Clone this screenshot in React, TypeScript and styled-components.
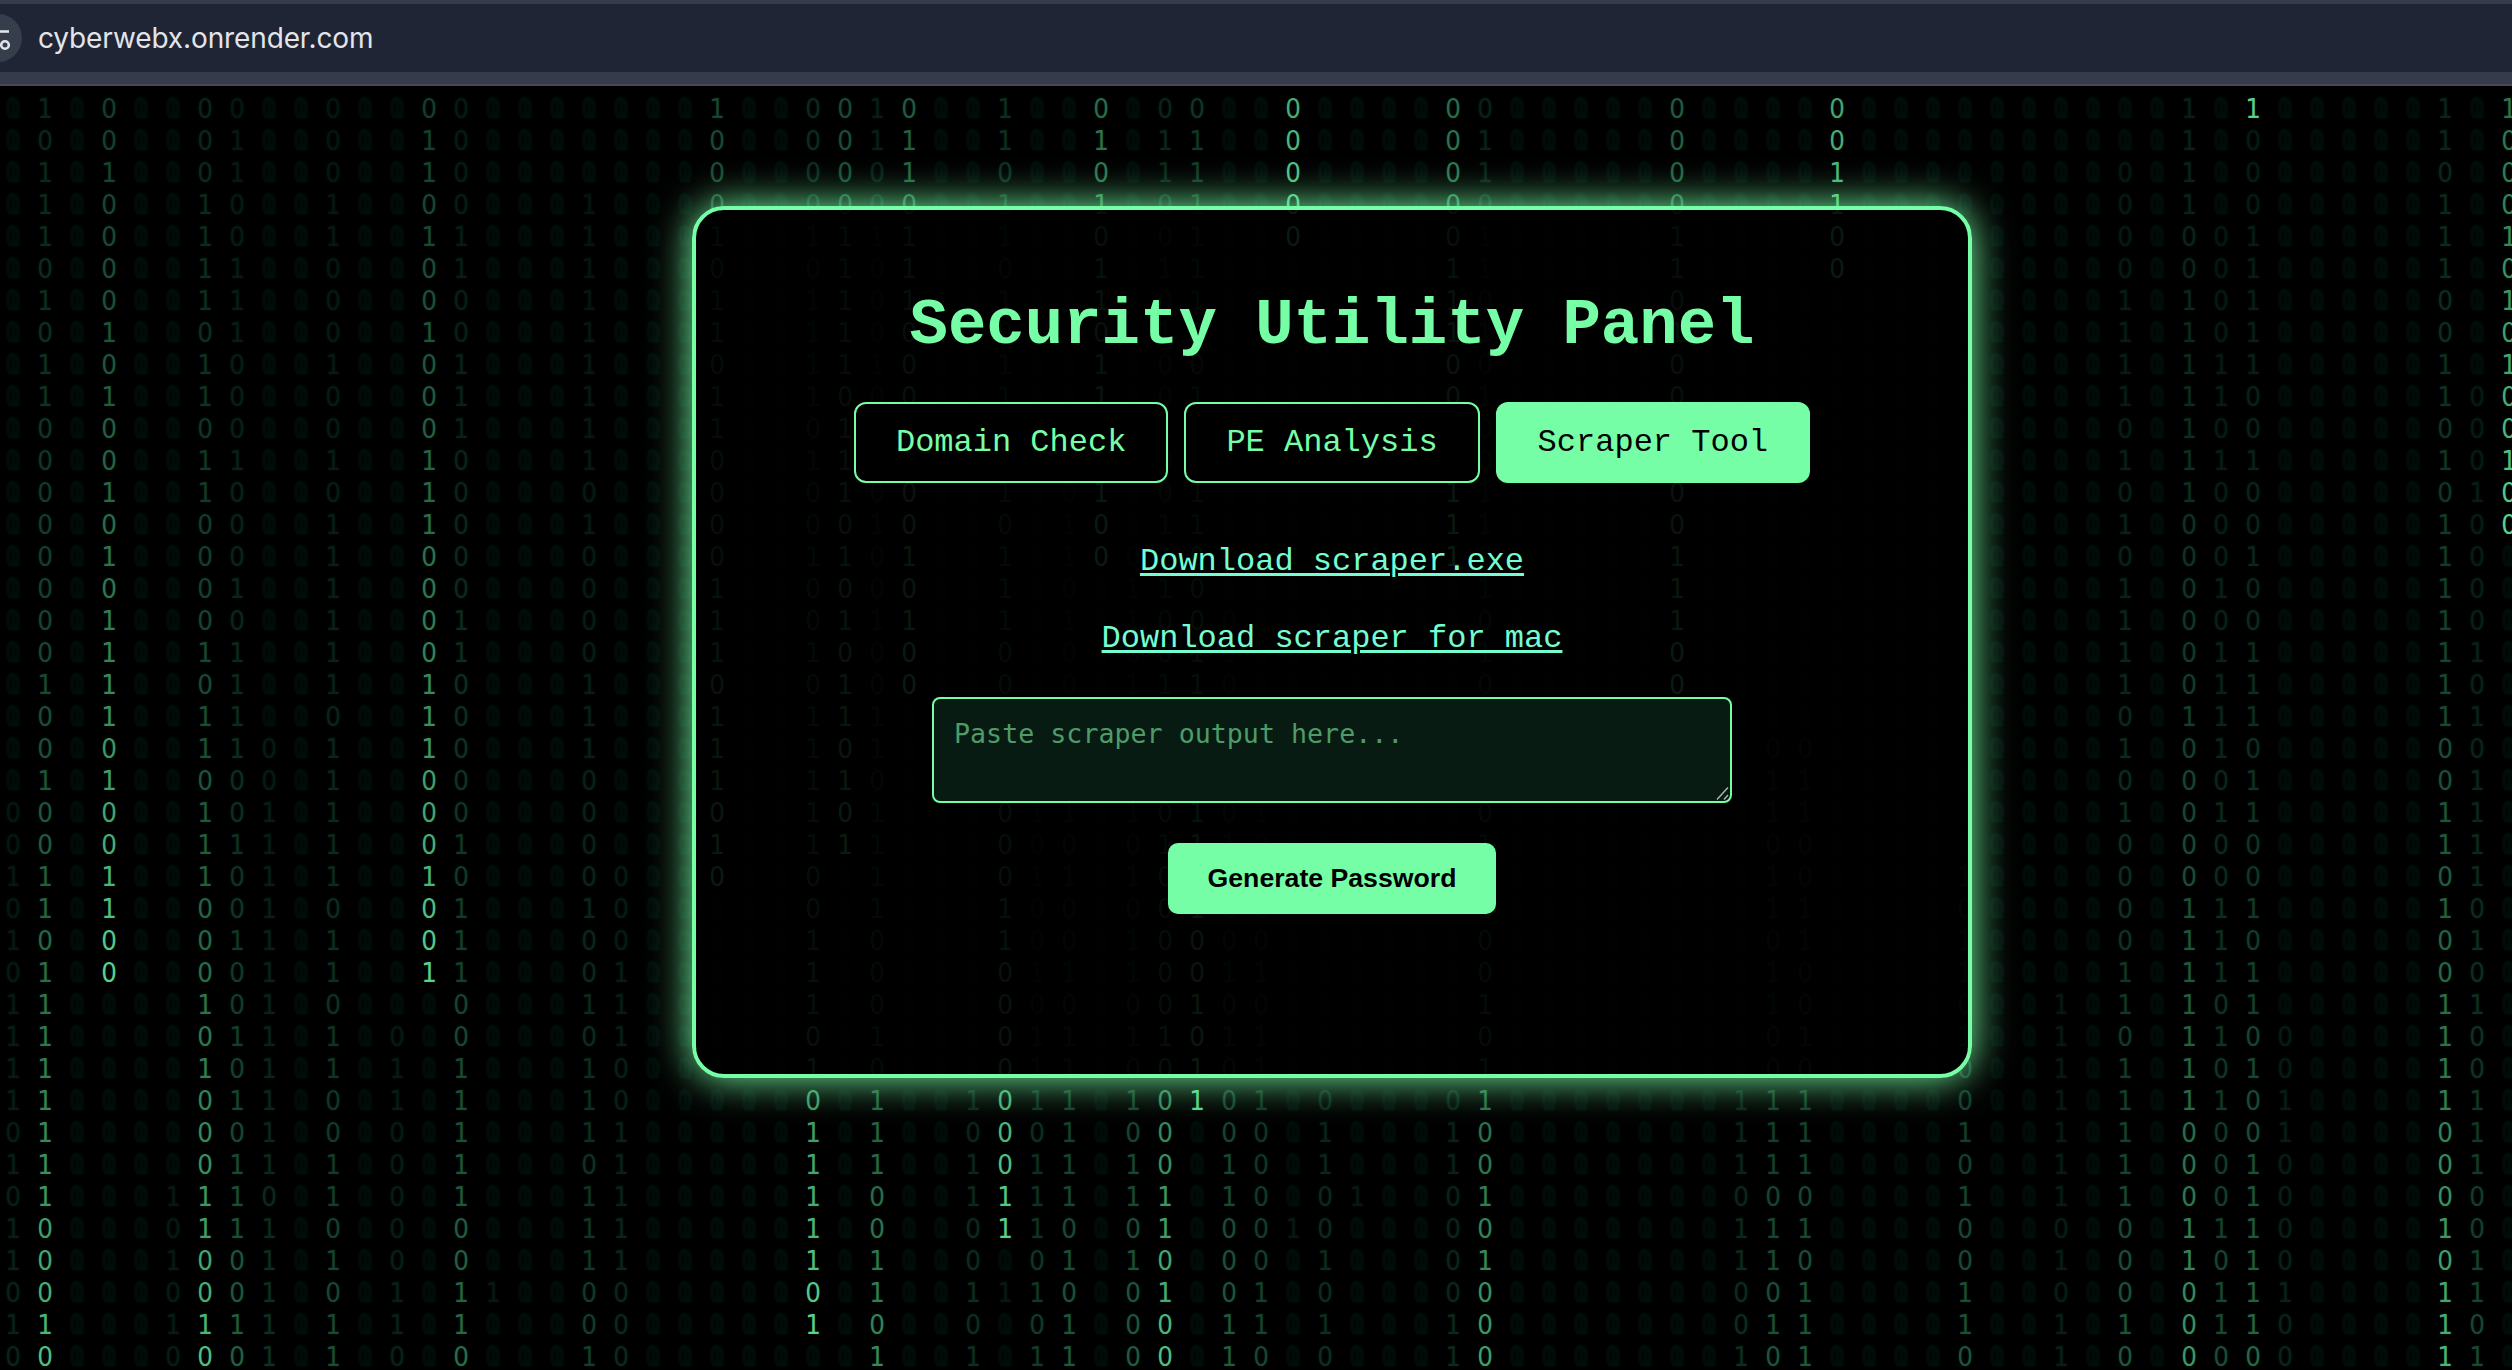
import React from "react";
import styled, { createGlobalStyle, css } from "styled-components";

const GREEN = "#76fea6";
const AQUA = "#74fcd2";
const ROWS = 40;
const COLUMNS = 79;
const FADE = 0.95;
const MONO = `"Courier New", "Liberation Mono", monospace`;

const GlobalStyle = createGlobalStyle`
  html, body { margin: 0; padding: 0; background: #000; overflow: hidden; }
  *, *::before, *::after { box-sizing: border-box; }
`;

/* A falling trail: first row, its digits, and how many frames ago its last digit was painted. */
type Trail = { from: number; digits: string; age: number };

const trails: Record<number, Trail[]> = {
  0: [{ from: 22, digits: "001010111101011010", age: 42 }],
  1: [{ from: 0, digits: "1011101011000000001001001101111111100010", age: 2 }],
  3: [{ from: 0, digits: "0010000101001010111101001100", age: 0 }],
  5: [{ from: 34, digits: "101010", age: 50 }],
  6: [{ from: 0, digits: "0001111011011000010110111000101000110010", age: 2 }],
  7: [{ from: 0, digits: "0110011100010001011110010010010101110010", age: 17 }],
  8: [{ from: 20, digits: "00111111111111011111", age: 33 }],
  10: [{ from: 0, digits: "0001100010010111111011111011011001101011", age: 22 }],
  12: [{ from: 29, digits: "01100000110", age: 44 }],
  13: [{ from: 0, digits: "0110100100011100001110001001", age: 0 }],
  14: [{ from: 0, digits: "0000110011100000110000010111001111100110", age: 14 }],
  15: [{ from: 37, digits: "1", age: 54 }],
  18: [{ from: 3, digits: "1111111110100001110000100101110111001", age: 27 }],
  19: [{ from: 24, digits: "0001110011111000", age: 38 }],
  22: [{ from: 0, digits: "1000101101100001110111010", age: 0 }],
  25: [{ from: 0, digits: "000010111101001001011111001110101111101", age: 0 }],
  26: [{ from: 0, digits: "000011111011101010110101", age: 0 }],
  27: [{ from: 0, digits: "1100100010110100100110111100010111001101", age: 9 }],
  28: [{ from: 0, digits: "0110111000010010100", age: 0 }],
  30: [{ from: 31, digits: "101100101", age: 34 }],
  31: [
    { from: 0, digits: "110110101100101110010100011000000011", age: 0 },
    { from: 37, digits: "1", age: 54 },
  ],
  32: [{ from: 20, digits: "01101001011101110101", age: 28 }],
  33: [{ from: 12, digits: "0110100101101001011111101011", age: 19 }],
  34: [{ from: 0, digits: "010101101110100", age: 0 }],
  35: [{ from: 14, digits: "01101101101011010101101000", age: 18 }],
  36: [{ from: 0, digits: "0110010100100111001010010000010000110100", age: 2 }],
  37: [{ from: 0, digits: "01111110010011000110101101001011", age: 0 }],
  38: [{ from: 16, digits: "010011010001010001100011", age: 18 }],
  39: [{ from: 20, digits: "01101001011100000110", age: 24 }],
  40: [
    { from: 0, digits: "00000", age: 0 },
    { from: 35, digits: "1", age: 54 },
  ],
  41: [{ from: 31, digits: "011001010", age: 34 }],
  42: [{ from: 34, digits: "1", age: 54 }],
  45: [
    { from: 0, digits: "000001110000111", age: 0 },
    { from: 31, digits: "011000011", age: 38 },
  ],
  46: [{ from: 0, digits: "0110110101001101010101011100101100101000", age: 6 }],
  52: [{ from: 0, digits: "0000110100100011100", age: 0 }],
  54: [{ from: 31, digits: "111011001", age: 35 }],
  55: [{ from: 20, digits: "01101101100111011010", age: 20 }],
  56: [{ from: 20, digits: "01100110010111010111", age: 19 }],
  57: [{ from: 0, digits: "001100", age: 0 }],
  61: [{ from: 24, digits: "1011010010100110", age: 20 }],
  64: [{ from: 28, digits: "111111101011", age: 46 }],
  66: [{ from: 2, digits: "00001111010101111010100001101111100010", age: 19 }],
  68: [{ from: 0, digits: "1111001111111000000100000111111100011000", age: 7 }],
  69: [{ from: 4, digits: "000011010001011110100111010100010110", age: 22 }],
  70: [
    { from: 0, digits: "1", age: 0 },
    { from: 1, digits: "000111110010010011101100101101001111110", age: 15 },
  ],
  71: [{ from: 29, digits: "00110000100", age: 42 }],
  76: [{ from: 0, digits: "1101110011010111111100110100111100010111", age: 3 }],
  77: [{ from: 9, digits: "0001000010101111010100111001101", age: 23 }],
  78: [{ from: 0, digits: "10001010100100", age: 0 }],
};

type Glyph = { digit: string; level: number };

function buildColumn(index: number): Glyph[] {
  const cells: Glyph[] = Array.from({ length: ROWS }, () => ({ digit: "0", level: 0 }));
  (trails[index] ?? []).forEach(({ from, digits, age }) => {
    digits.split("").forEach((digit, i) => {
      const row = from + i;
      if (row < ROWS) cells[row] = { digit, level: Math.pow(FADE, age + digits.length - 1 - i) };
    });
  });
  return cells;
}

const columns = Array.from({ length: COLUMNS }, (_, i) => buildColumn(i));

const shade = (level: number) =>
  `rgb(${Math.round(1 + 90 * Math.pow(level, 1.15))}, ${Math.round(13 + 197 * level)}, ${Math.round(10 + 130 * level)})`;

const Page = styled.div`
  display: flex;
  flex-direction: column;
  width: 100%;
  height: 1370px;
  background: #000;
`;

const Toolbar = styled.header`
  display: flex;
  align-items: center;
  height: 86px;
  flex: none;
  background: #1f2535;
  border-top: 4px solid #363c4b;
  border-bottom: 2px solid #48494c;
  box-shadow: inset 0 -12px 0 #353b4a;
  padding-bottom: 12px;
  overflow: hidden;
`;

const SiteInfo = styled.div`
  display: flex;
  flex: none;
  width: 48px;
  height: 48px;
  margin-left: -26px;
  border-radius: 50%;
  background: #363d4b;
`;

const Address = styled.span`
  margin-left: 16px;
  font: 400 28px/40px Inter, sans-serif;
  letter-spacing: -0.12px;
  color: #e3e4ea;
`;

const Stage = styled.main`
  display: grid;
  flex: 1;
  min-height: 0;
  overflow: hidden;
  grid-template-columns: 1fr;
  grid-template-rows: 1284px;
`;

const Rain = styled.div`
  grid-area: 1 / 1;
  display: flex;
  margin-left: -3px;
  padding-top: 7px;
  overflow: hidden;
  user-select: none;
`;

const RainColumn = styled.div`
  display: flex;
  flex: none;
  flex-direction: column;
  width: 32px;
`;

const Digit = styled.span<{ $ghost: boolean }>`
  display: grid;
  justify-content: center;
  flex: none;
  height: 32px;
  font: 400 27.4px/32px "DejaVu Sans Condensed", "DejaVu Sans", sans-serif;
  font-stretch: condensed;
  text-shadow: 0 0 3px #04140f;
  ${({ $ghost }) =>
    $ghost &&
    css`
      &::before {
        content: "1";
        grid-area: 1 / 1;
      }
    `}
`;

const Stroke = styled.span`
  grid-area: 1 / 1;
`;

const Panel = styled.section`
  grid-area: 1 / 1;
  justify-self: center;
  display: flex;
  flex-direction: column;
  align-items: center;
  position: relative;
  left: 76px;
  width: 1280px;
  height: 872px;
  margin-top: 120px;
  padding-top: 80px;
  border: 4px solid ${GREEN};
  border-radius: 32px;
  background: rgba(0, 0, 0, 0.88);
  background-clip: padding-box;
  box-shadow: 0 0 40px ${GREEN};
`;

const Title = styled.h1`
  margin: 0 0 40px;
  font: 700 64px/72px ${MONO};
  color: ${GREEN};
`;

const Tabs = styled.nav`
  display: flex;
  gap: 16px;
`;

const Tab = styled.button<{ $active?: boolean }>`
  height: 81px;
  padding: 0 40px;
  border: 2px solid ${GREEN};
  border-radius: 12px;
  background: ${({ $active }) => ($active ? GREEN : "#000")};
  color: ${({ $active }) => ($active ? "#000" : GREEN)};
  font: 400 32px/36px ${MONO};
`;

const Links = styled.div`
  display: flex;
  flex-direction: column;
  align-items: center;
  gap: 41px;
  margin-top: 61px;
`;

const DownloadLink = styled.a`
  font: 400 32px/36px ${MONO};
  color: ${AQUA};
  text-decoration: underline;
  text-decoration-thickness: 3px;
  text-underline-offset: 3px;
`;

const Field = styled.div`
  display: grid;
  width: 800px;
  height: 106px;
  margin-top: 40px;
`;

const Output = styled.textarea`
  grid-area: 1 / 1;
  width: 100%;
  height: 100%;
  padding: 19px 20px;
  border: 2px solid ${GREEN};
  border-radius: 8px;
  outline: none;
  resize: none;
  background: #081b13;
  color: ${GREEN};
  font: 400 26.67px/32px "DejaVu Sans Mono", monospace;
  &::placeholder {
    color: #4f9b68;
    opacity: 1;
  }
`;

const Grip = styled.svg`
  grid-area: 1 / 1;
  place-self: end;
  margin: 0 2px 2px 0;
  pointer-events: none;
`;

const Submit = styled.button`
  height: 71px;
  margin-top: 40px;
  padding: 0 40px 2px;
  border: 0;
  border-radius: 10px;
  background: ${GREEN};
  color: #000;
  font: 700 26.67px/30px "Liberation Sans", Arial, sans-serif;
`;

export default function App() {
  return (
    <Page>
      <GlobalStyle />
      <Toolbar>
        <SiteInfo>
          <svg width="48" height="48" viewBox="0 0 48 48" fill="none" stroke="#e3e4ea" strokeWidth="2.6">
            <path d="M20 17.5H35" />
            <path d="M14 31H26" />
            <circle cx="31" cy="31" r="3.8" />
          </svg>
        </SiteInfo>
        <Address>cyberwebx.onrender.com</Address>
      </Toolbar>
      <Stage>
        <Rain aria-hidden>
          {columns.map((cells, c) => (
            <RainColumn key={c}>
              {cells.map(({ digit, level }, r) => (
                <Digit key={r} $ghost={level === 0} style={{ color: shade(level) }}>
                  <Stroke>{digit}</Stroke>
                </Digit>
              ))}
            </RainColumn>
          ))}
        </Rain>
        <Panel>
          <Title>Security Utility Panel</Title>
          <Tabs>
            <Tab>Domain Check</Tab>
            <Tab>PE Analysis</Tab>
            <Tab $active>Scraper Tool</Tab>
          </Tabs>
          <Links>
            <DownloadLink>Download scraper.exe</DownloadLink>
            <DownloadLink>Download scraper for mac</DownloadLink>
          </Links>
          <Field>
            <Output placeholder="Paste scraper output here..." />
            <Grip width="16" height="16" viewBox="0 0 16 16" fill="none" stroke="#a9b3ae" strokeWidth="1.5">
              <path d="M3 14.5L14 2.5M10 14.5L14 10" />
            </Grip>
          </Field>
          <Submit>Generate Password</Submit>
        </Panel>
      </Stage>
    </Page>
  );
}
